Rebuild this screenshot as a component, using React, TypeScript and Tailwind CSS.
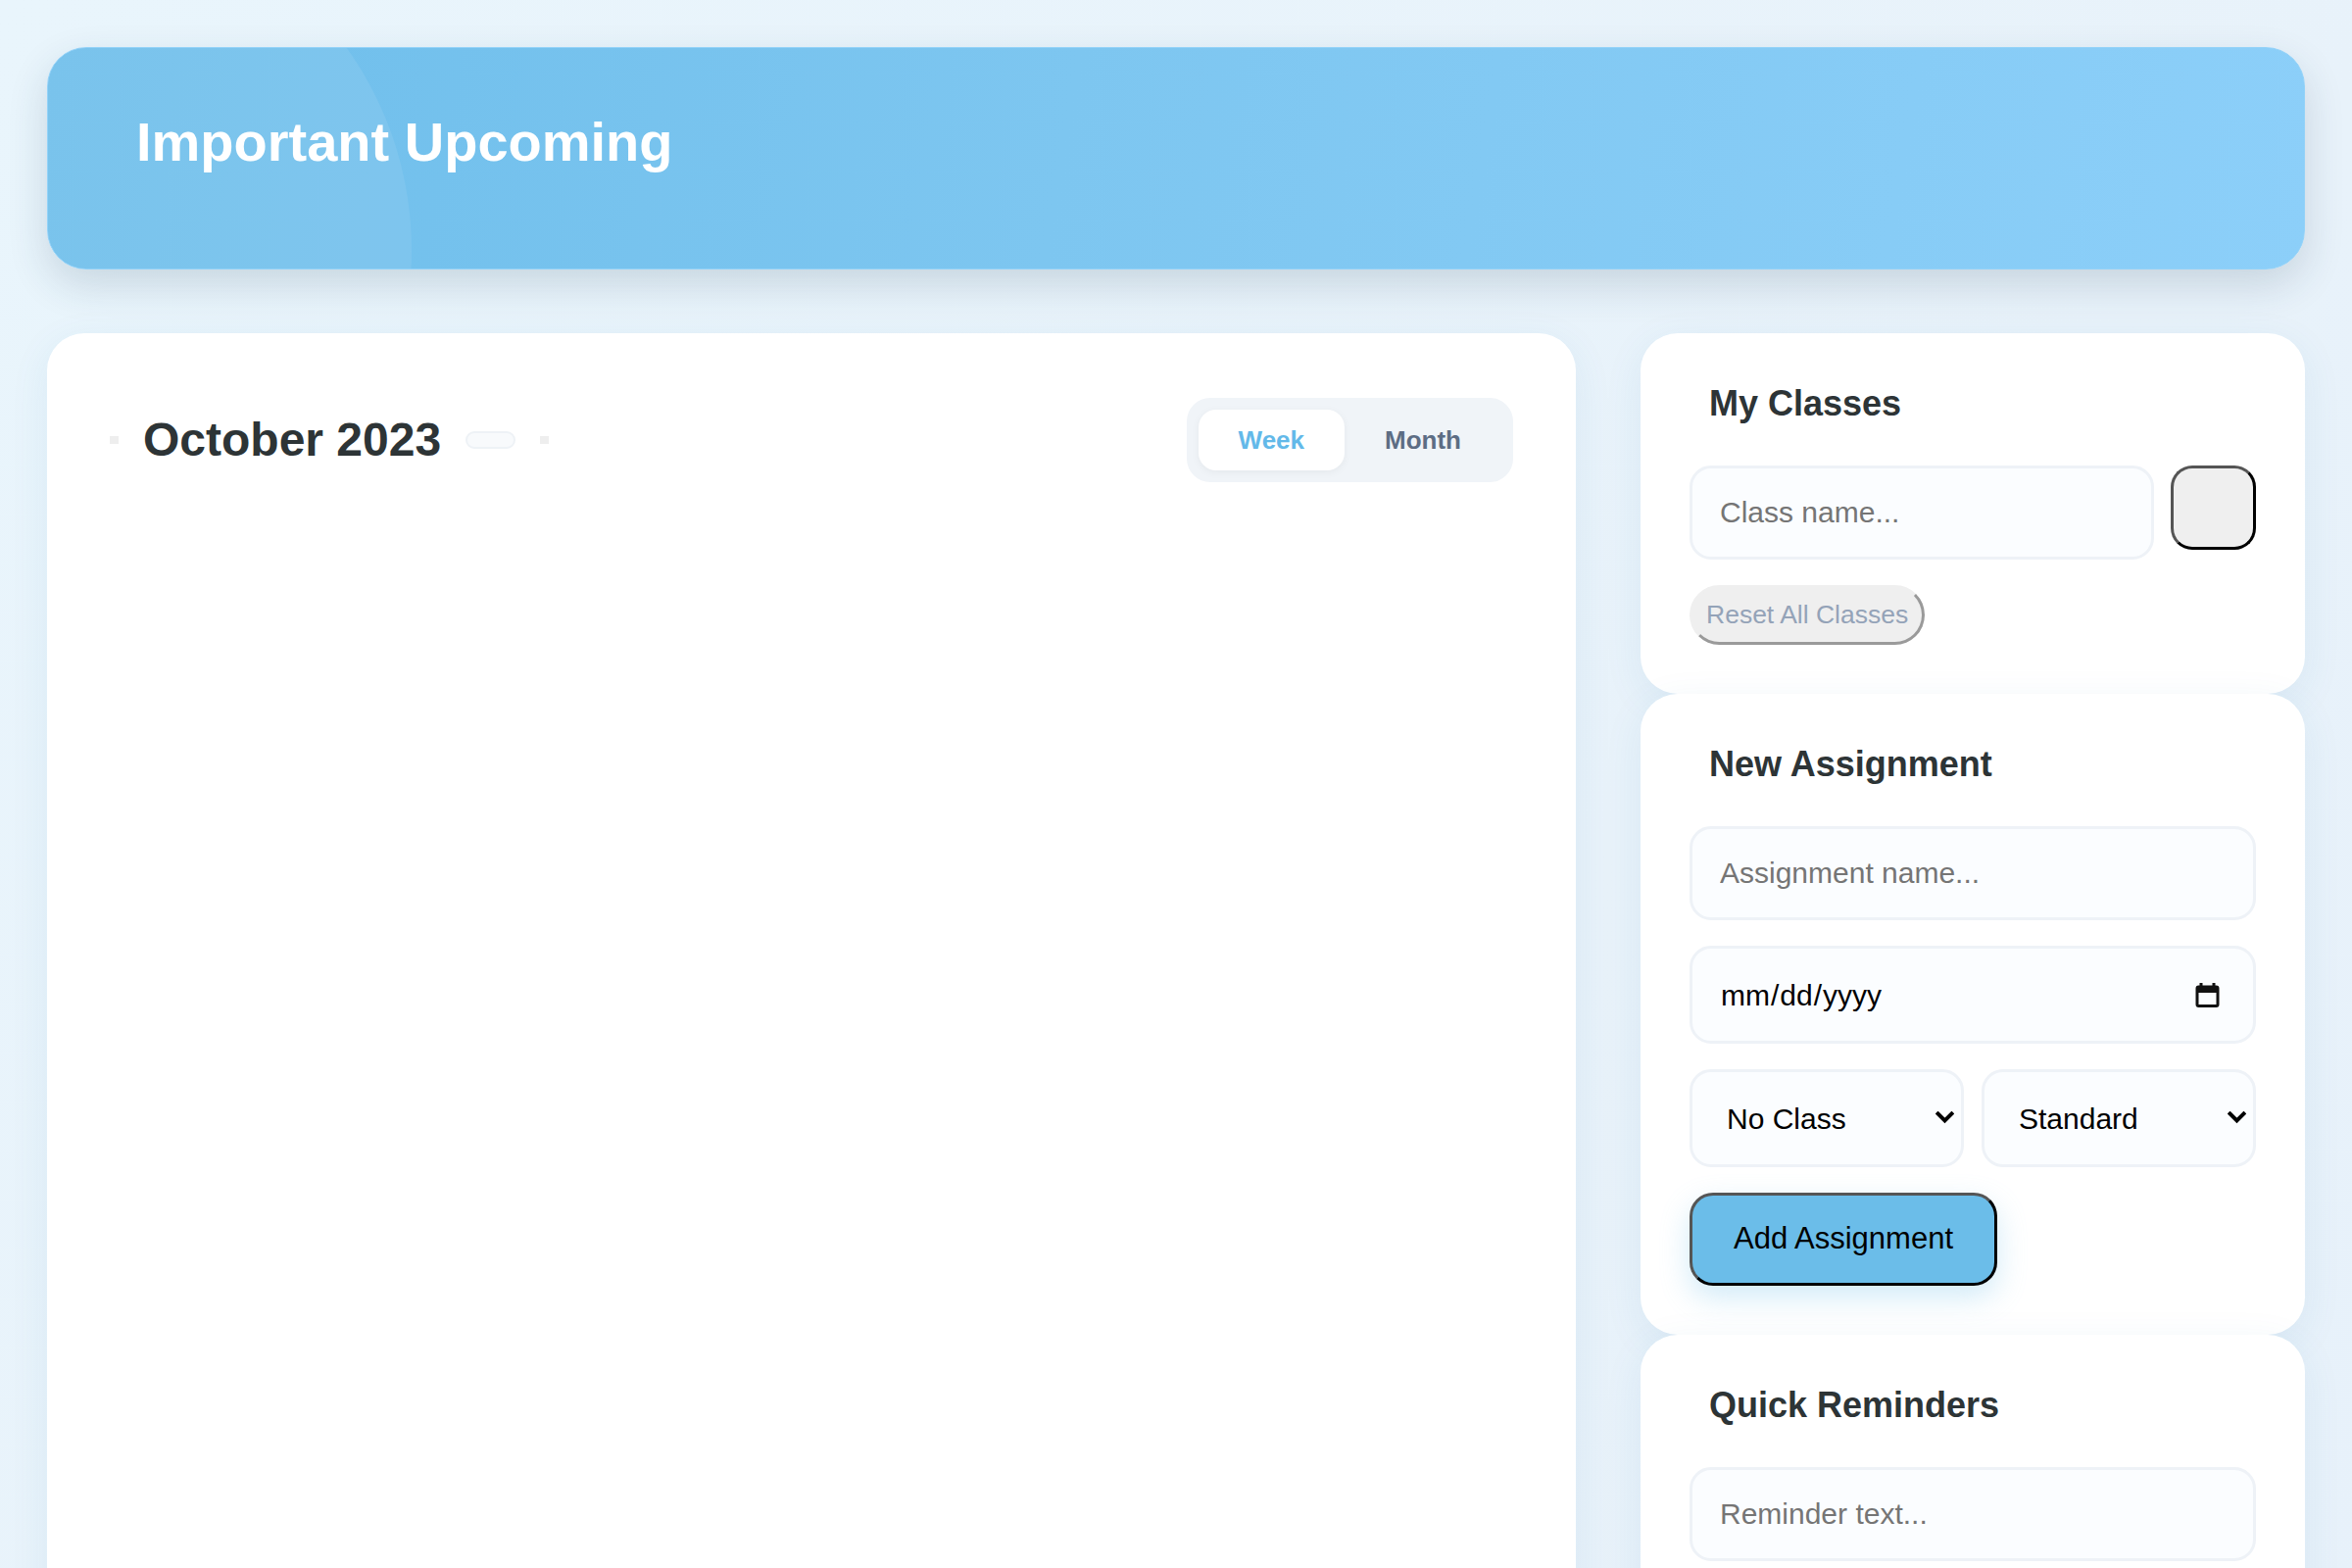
import React from "react";

const font = { fontFamily: '"Liberation Sans", Arial, sans-serif' };

function Card({ title, children }: { title: string; children: React.ReactNode }) {
  return (
    <section className="bg-white rounded-[38px] p-[50px] shadow-[0_10px_40px_rgba(40,110,170,0.08)]">
      <h2 className="pl-[20px] text-[36px] leading-[44px] font-bold text-[#2d3436] mb-[41px]">{title}</h2>
      {children}
    </section>
  );
}

const inputCls =
  "block w-full h-[96px] rounded-[22px] border-[3px] border-[#eef2f7] bg-[#fbfdff] px-[28px] text-[30px] text-black placeholder:text-[#757575] outline-none";

function Select({ value }: { value: string }) {
  return (
    <div className="relative flex-1 min-w-0">
      <select className="block h-[100px] w-full appearance-none rounded-[22px] border-[3px] border-[#eef2f7] bg-[#fbfdff] pl-[35px] pr-[40px] text-[30px] text-black outline-none">
        <option>{value}</option>
      </select>
      <svg
        className="pointer-events-none absolute right-[10px] top-[43px]"
        width="19"
        height="13"
        viewBox="0 0 19 13"
        fill="none"
      >
        <path d="M2.5 2.5 L9.5 9.5 L16.5 2.5" stroke="black" strokeWidth="4" strokeLinecap="square" strokeLinejoin="miter" />
      </svg>
    </div>
  );
}

export default function App() {
  return (
    <div
      className="min-h-screen bg-[linear-gradient(135deg,#e9f5fc_0%,#e8f2fa_60%,#e7f1fa_100%)] px-[48px] pt-[48px] text-black"
      style={font}
    >
      <header className="relative overflow-hidden rounded-[40px] border-[1.5px] border-[#93d2f8] bg-[linear-gradient(100deg,#6ebeeb_0%,#7dc6f0_45%,#8ccff9_100%)] pl-[90px] pt-[62px] pb-[96px] shadow-[0_16px_40px_rgba(30,60,90,0.16)]">
        <div className="absolute left-[-337px] top-[-148px] h-[708px] w-[708px] rounded-full bg-white/[0.08]" />
        <h1 className="relative text-[56px] leading-[67px] font-bold text-white">Important Upcoming</h1>
      </header>

      <div className="mt-[65px] grid grid-cols-[1fr_678px] gap-[66px] items-stretch">
        <main className="bg-white rounded-[38px] px-[64px] pt-[66px] pb-[64px] shadow-[0_10px_40px_rgba(40,110,170,0.08)] min-h-[1400px]">
          <div className="flex items-center justify-between">
            <div className="flex items-center gap-[25px]">
              <span className="block h-[8px] w-[9px] bg-[#eeeeee]" />
              <h2 className="text-[48px] leading-[56px] font-bold text-[#2d3436]">October 2023</h2>
              <span className="block h-[18px] w-[51px] rounded-full border-2 border-[#eef2f6] bg-[#f8fafc]" />
              <span className="block h-[8px] w-[9px] bg-[#eeeeee]" />
            </div>
            <div className="flex rounded-[24px] bg-[#f0f4f8] p-[12px]">
              <button className="rounded-[18px] bg-white px-[41px] py-[16px] text-[26px] leading-[30px] font-bold text-[#63b9e9] shadow-[0_2px_8px_rgba(0,0,0,0.05)]">
                Week
              </button>
              <button className="rounded-[18px] px-[41px] py-[16px] text-[26px] leading-[30px] font-bold text-[#5d6d84]">
                Month
              </button>
            </div>
          </div>
        </main>

        <aside className="flex flex-col">
          <Card title="My Classes">
            <div className="flex gap-[17px]">
              <input className={inputCls + " flex-1 min-w-0"} placeholder="Class name..." />
              <div className="h-[86px] w-[87px] shrink-0 rounded-[22px] border-[3px] border-t-[#555555] border-l-[#555555] border-r-black border-b-black bg-[#efefef]" />
            </div>
            <button className="mt-[26px] block h-[61px] rounded-full border-[3px] border-t-[#efefef] border-l-[#efefef] border-r-[#9a9a9a] border-b-[#9a9a9a] bg-[#efefef] px-[14px] text-[26.5px] text-[#94a3b8]">
              Reset All Classes
            </button>
          </Card>

          <Card title="New Assignment">
            <div className="flex flex-col gap-[26px]">
              <input className={inputCls} placeholder="Assignment name..." />
              <div className="relative">
                <input
                  type="date"
                  className={inputCls + " h-[100px] [&::-webkit-calendar-picker-indicator]:opacity-0"}
                />
                <svg
                  className="pointer-events-none absolute right-[37px] top-[37px]"
                  width="25"
                  height="26"
                  viewBox="0 0 25 26"
                  fill="none"
                >
                  <rect x="2" y="5" width="21" height="19.5" rx="1.5" stroke="#111" strokeWidth="3" />
                  <rect x="2" y="5" width="21" height="6" fill="#111" />
                  <rect x="4.5" y="1" width="3" height="5" fill="#111" />
                  <rect x="17.5" y="1" width="3" height="5" fill="#111" />
                </svg>
              </div>
              <div className="flex gap-[18px]">
                <Select value="No Class" />
                <Select value="Standard" />
              </div>
              <div>
                <button className="h-[95px] rounded-[24px] border-[3px] border-t-[#555555] border-l-[#555555] border-r-black border-b-black bg-[#6bbde9] px-[42px] text-[31px] text-black shadow-[0_12px_30px_rgba(107,189,233,0.3)]">
                  Add Assignment
                </button>
              </div>
            </div>
          </Card>

          <Card title="Quick Reminders">
            <input className={inputCls} placeholder="Reminder text..." />
            <div className="h-[120px]" />
          </Card>
        </aside>
      </div>
    </div>
  );
}
